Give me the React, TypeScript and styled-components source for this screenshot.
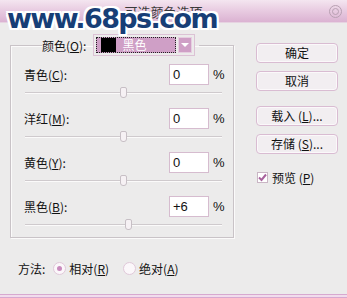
import React, { useState } from "react";
import styled, { createGlobalStyle } from "styled-components";

const GlobalStyle = createGlobalStyle`
  html, body {
    margin: 0;
    padding: 0;
    background: #ecebeb;
  }
  body {
    font-family: "Noto Sans CJK SC", "Liberation Sans", sans-serif;
    font-size: 12px;
    color: #111;
  }
`;

const Window = styled.div`
  position: relative;
  width: 347px;
  height: 298px;
  display: flex;
  flex-direction: column;
  background: #ecebeb;
  overflow: hidden;
`;

const TitleBar = styled.div`
  height: 22px;
  display: flex;
  align-items: center;
  justify-content: center;
  position: relative;
  background: linear-gradient(to bottom, #f4e6f0 0%, #e9cde2 45%, #dbb2d2 100%);
  border-bottom: 1px solid #e6d3e1;
  color: #3a3a3a;
  font-size: 13px;
  padding-right: 20px;
`;

const CloseButton = styled.div`
  position: absolute;
  right: 5px;
  top: 5px;
  width: 13px;
  height: 13px;
  border-radius: 50%;
  border: 1px solid #b8a0b2;
  box-sizing: border-box;
  display: flex;
  align-items: center;
  justify-content: center;
  &::after {
    content: "";
    width: 5px;
    height: 5px;
    border-radius: 50%;
    border: 1px solid #b8a0b2;
  }
`;

const Watermark = styled.div`
  position: absolute;
  left: 7px;
  top: 4px;
  font-family: "DejaVu Sans", sans-serif;
  font-weight: bold;
  font-size: 27px;
  line-height: 30px;
  letter-spacing: -1.6px;
  color: #173e76;
  text-shadow:
    -2px 0 #fff, 2px 0 #fff, 0 -2px #fff, 0 2px #fff,
    -1px -1px #fff, 1px 1px #fff, -1px 1px #fff, 1px -1px #fff,
    -2px -2px #fff, 2px 2px #fff, -2px 2px #fff, 2px -2px #fff;
  pointer-events: none;
`;

const Content = styled.div`
  flex: 1;
  display: flex;
  flex-direction: column;
`;

const Main = styled.div`
  display: flex;
  padding-left: 10px;
`;

const GroupBox = styled.fieldset`
  margin: 11px 0 0 0;
  width: 224px;
  box-sizing: border-box;
  border: 1px solid #c9c3c7;
  box-shadow: inset 1px 1px 0 #fbfafa, 1px 1px 0 #fbfafa;
  padding: 8px 10px 6px 13px;
  min-inline-size: 0;
`;

const Legend = styled.legend`
  display: flex;
  align-items: center;
  padding: 0 4px 0 0;
  margin-left: 18px;
`;

const LegendLabel = styled.span`
  margin-right: 7px;
`;

const Dropdown = styled.div`
  display: flex;
  align-items: center;
  gap: 2px;
  padding: 2px;
  border: 1px solid #dcc2d5;
  background: #ecebeb;
`;

const DropdownField = styled.div`
  width: 80px;
  height: 16px;
  display: flex;
  align-items: center;
  border: 1px dotted #222;
  background: #cf9fc6;
  box-sizing: border-box;
  padding-left: 4px;
`;

const Swatch = styled.div`
  width: 15px;
  height: 14px;
  background: #000;
  margin-right: 6px;
`;

const DropdownText = styled.span`
  color: #fff;
  font-size: 12px;
  line-height: 14px;
`;

const ArrowButton = styled.div`
  width: 14px;
  height: 16px;
  box-sizing: border-box;
  border: 1px solid #e6cfe0;
  background: #cf9fc6;
  display: flex;
  align-items: center;
  justify-content: center;
  &::after {
    content: "";
    border-left: 4px solid transparent;
    border-right: 4px solid transparent;
    border-top: 4px solid #fff;
  }
`;

const Section = styled.div`
  display: flex;
  flex-direction: column;
  gap: 2px;
  margin-bottom: 9px;
  &:last-child {
    margin-bottom: 0;
  }
`;

const Row = styled.div`
  display: flex;
  align-items: center;
  height: 21px;
`;

const RowLabel = styled.span`
  flex: 1;
`;

const NumberBox = styled.div`
  width: 40px;
  height: 21px;
  box-sizing: border-box;
  border: 1px solid #d6bccf;
  background: #fff;
  padding-left: 3px;
  display: flex;
  align-items: center;
  font-family: "Liberation Sans", sans-serif;
  font-size: 13px;
`;

const Percent = styled.span`
  width: 10px;
  margin-left: 4px;
  font-family: "Liberation Sans", sans-serif;
  font-size: 13px;
`;

const Slider = styled.div`
  position: relative;
  height: 12px;
  margin: 0 0 0 1px;
  width: 197px;
  &::before {
    content: "";
    position: absolute;
    left: 0;
    right: 0;
    top: 5px;
    height: 1px;
    background: #cfcacd;
    border-bottom: 1px solid #fbfafa;
  }
`;

const Thumb = styled.div`
  position: absolute;
  top: 0;
  width: 7px;
  height: 11px;
  margin-left: -4px;
  box-sizing: border-box;
  border: 1px solid #c7bfc5;
  border-radius: 2px 2px 3px 3px;
  background: #f6f1f4;
`;

const SideColumn = styled.div`
  display: flex;
  flex-direction: column;
  margin-left: 22px;
  padding-top: 20px;
  width: 82px;
`;

const Button = styled.button<{ $gap?: number }>`
  height: 20px;
  width: 82px;
  margin-bottom: ${(p) => p.$gap ?? 8}px;
  border: 1px solid #d9bcd2;
  border-radius: 4px;
  background: #f2eef1;
  box-shadow: inset 0 0 0 1px #fbf8fa;
  font-family: "Noto Sans CJK SC", sans-serif;
  font-size: 12px;
  color: #111;
  padding: 0;
  line-height: 18px;
`;

const CheckRow = styled.label`
  display: flex;
  align-items: center;
  margin-left: 1px;
  gap: 4px;
`;

const CheckBox = styled.span`
  width: 11px;
  height: 11px;
  box-sizing: border-box;
  border: 1px solid #c9b5c4;
  background: #fff;
  display: flex;
  align-items: center;
  justify-content: center;
`;

const MethodRow = styled.div`
  display: flex;
  align-items: center;
  padding-left: 18px;
  margin-top: 23px;
  height: 14px;
`;

const MethodLabel = styled.span`
  margin-right: 8px;
`;

const Radio = styled.span<{ $on?: boolean }>`
  width: 13px;
  height: 13px;
  box-sizing: border-box;
  border-radius: 50%;
  border: 1px solid #e0c8d9;
  background: #fbf7fa;
  display: flex;
  align-items: center;
  justify-content: center;
  margin-right: 3px;
  &::after {
    content: "";
    display: ${(p) => (p.$on ? "block" : "none")};
    width: 5px;
    height: 5px;
    border-radius: 50%;
    background: #c98bbd;
  }
`;

const RadioText = styled.span`
  margin-right: 14px;
`;

const BottomEdge = styled.div`
  margin-top: auto;
  height: 4px;
  border-top: 1px solid #d7a8cf;
  border-bottom: 1px solid #d7a8cf;
  background: #f1dcec;
  box-sizing: border-box;
`;

const rows = [
  { name: "青色", key: "C", value: "0", pos: 0 },
  { name: "洋红", key: "M", value: "0", pos: 0 },
  { name: "黄色", key: "Y", value: "0", pos: 0 },
  { name: "黑色", key: "B", value: "+6", pos: 6 },
];

export default function App() {
  const [preview] = useState(true);
  return (
    <>
      <GlobalStyle />
      <Window>
        <TitleBar>
          可选颜色选项
          <CloseButton />
        </TitleBar>
        <Content>
          <Main>
            <GroupBox>
              <Legend>
                <LegendLabel>
                  颜色(<u>O</u>):
                </LegendLabel>
                <Dropdown>
                  <DropdownField>
                    <Swatch />
                    <DropdownText>黑色</DropdownText>
                  </DropdownField>
                  <ArrowButton />
                </Dropdown>
              </Legend>
              {rows.map((r) => (
                <Section key={r.key}>
                  <Row>
                    <RowLabel>
                      {r.name}(<u>{r.key}</u>):
                    </RowLabel>
                    <NumberBox>{r.value}</NumberBox>
                    <Percent>%</Percent>
                  </Row>
                  <Slider>
                    <Thumb style={{ left: `${50 + r.pos / 2}%` }} />
                  </Slider>
                </Section>
              ))}
            </GroupBox>
            <SideColumn>
              <Button>确定</Button>
              <Button $gap={15}>取消</Button>
              <Button>
                载入 (<u>L</u>)...
              </Button>
              <Button $gap={15}>
                存储 (<u>S</u>)...
              </Button>
              <CheckRow>
                <CheckBox>
                  {preview && (
                    <svg width="9" height="9" viewBox="0 0 9 9">
                      <path d="M1 4.5 L3.5 7 L8 1.5" stroke="#a8629d" strokeWidth="2" fill="none" />
                    </svg>
                  )}
                </CheckBox>
                <span>
                  预览 (<u>P</u>)
                </span>
              </CheckRow>
            </SideColumn>
          </Main>
          <MethodRow>
            <MethodLabel>方法:</MethodLabel>
            <Radio $on />
            <RadioText>
              相对(<u>R</u>)
            </RadioText>
            <Radio />
            <RadioText>
              绝对(<u>A</u>)
            </RadioText>
          </MethodRow>
          <BottomEdge />
        </Content>
        <Watermark>www.68ps.com</Watermark>
      </Window>
    </>
  );
}
